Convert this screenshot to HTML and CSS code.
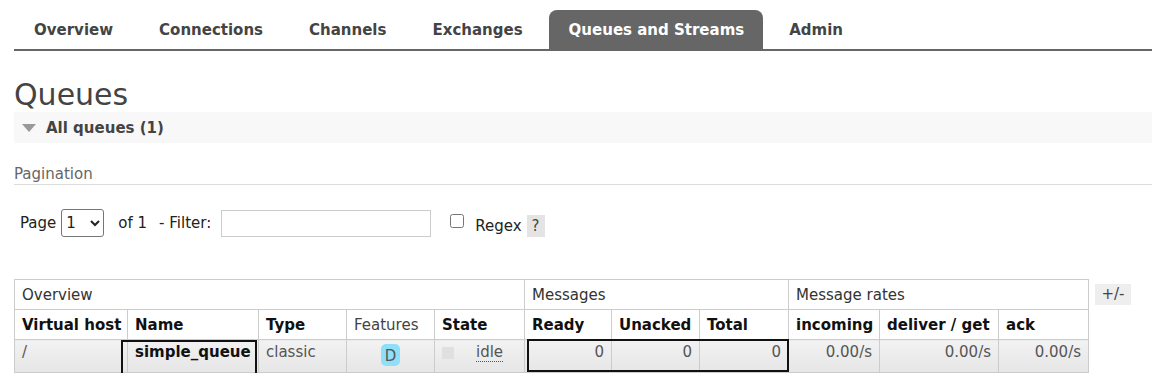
FILE: index.html
```html
<!DOCTYPE html>
<html>
    <head>
        <meta charset="UTF-8">
        <title>Queues - RabbitMQ Management</title>
        <link rel="stylesheet" href="styles.css">
    </head>

    <body>
        <div class="page">
            <ul class="menu">
                <li><a href="#">Overview</a></li>
                <li><a href="#">Connections</a></li>
                <li><a href="#">Channels</a></li>
                <li><a href="#">Exchanges</a></li>
                <li><a href="#" class="selected">Queues and Streams</a></li>
                <li><a href="#">Admin</a></li>
            </ul>

            <h1>Queues</h1>

            <div class="section-h">
                <span class="toggle"></span>
                All queues (1)
            </div>

            <h3 class="pagination">Pagination</h3>

            <div class="filter-row">
                <span>Page</span>
                <select class="page-select">
                    <option>1</option>
                </select>
                <span class="of">of 1</span>
                <span class="filter-label">- Filter:</span>
                <input type="text" class="filter-input">
                <input type="checkbox" class="regex-check">
                <span class="regex">Regex</span>
                <span class="help">?</span>
            </div>

            <div class="table-area">
                <div class="table-wrap">
                    <table class="list">
                        <colgroup>
                            <col style="width:113px">
                            <col style="width:131px">
                            <col style="width:88px">
                            <col style="width:88px">
                            <col style="width:90px">
                            <col style="width:87px">
                            <col style="width:88px">
                            <col style="width:89px">
                            <col style="width:91px">
                            <col style="width:119px">
                            <col style="width:90px">
                        </colgroup>
                        <thead>
                            <tr class="group-row">
                                <th colspan="5">Overview</th>
                                <th colspan="3">Messages</th>
                                <th colspan="3">Message rates</th>
                            </tr>
                            <tr class="head-row">
                                <th>Virtual host</th>
                                <th>Name</th>
                                <th>Type</th>
                                <th class="plain">Features</th>
                                <th>State</th>
                                <th>Ready</th>
                                <th>Unacked</th>
                                <th>Total</th>
                                <th>incoming</th>
                                <th>deliver / get</th>
                                <th>ack</th>
                            </tr>
                        </thead>
                        <tbody>
                            <tr class="data-row">
                                <td>/</td>
                                <td class="qname">simple_queue</td>
                                <td>classic</td>
                                <td class="c"><span class="badge">D</span></td>
                                <td><div class="state"><span class="state-box"></span><abbr>idle</abbr></div></td>
                                <td class="r">0</td>
                                <td class="r">0</td>
                                <td class="r">0</td>
                                <td class="r">0.00/s</td>
                                <td class="r">0.00/s</td>
                                <td class="r">0.00/s</td>
                            </tr>
                        </tbody>
                    </table>
                    <div class="mark mark-name"></div>
                    <div class="mark mark-msgs"></div>
                </div>
                <span class="plus-minus">+/-</span>
            </div>
        </div>
    </body>
</html>
```

FILE: styles.css
```css
body {
    margin: 0;
    font: 15px "DejaVu Sans", Verdana, sans-serif;
    color: #484848;
}

.page {
    padding-left: 14px;
}

/* menu tabs */
.menu {
    list-style: none;
    margin: 10px 0 0 0;
    padding: 0;
    display: flex;
    gap: 6px;
    border-bottom: 2px solid #666;
}

.menu a {
    display: block;
    padding: 1px 20px 0 20px;
    line-height: 38px;
    font-weight: bold;
    color: #444;
    text-decoration: none;
    border-radius: 8px 8px 0 0;
}

.menu a.selected {
    background-color: #666;
    color: #fff;
    padding-right: 19px;
}

h1 {
    font-size: 30px;
    font-weight: normal;
    line-height: 34px;
    color: #444;
    margin: 27px 0 0 0;
}

.section-h {
    background-color: #f8f8f8;
    height: 31px;
    display: flex;
    align-items: center;
    padding-left: 8px;
    font-weight: bold;
    color: #444;
}

.toggle {
    width: 0;
    height: 0;
    border-left: 7px solid transparent;
    border-right: 7px solid transparent;
    border-top: 8px solid #999;
    margin-right: 10px;
    margin-top: 1px;
}

.pagination {
    font-size: 15px;
    font-weight: normal;
    line-height: 18px;
    color: #666;
    margin: 22px 0 0 0;
    padding-bottom: 1px;
    border-bottom: 1px solid #ddd;
}

/* filter row */
.filter-row {
    display: flex;
    align-items: center;
    margin-top: 24px;
    padding-left: 6px;
    height: 28px;
    color: #222;
}

.page-select {
    margin-left: 5px;
    width: 43px;
    height: 28px;
    font: 15px "DejaVu Sans", Verdana, sans-serif;
    border: 1px solid #767676;
    border-radius: 3px;
    background: #fff;
    color: #222;
}

.of {
    margin-left: 14px;
}

.filter-label {
    margin-left: 12px;
}

.filter-input {
    margin: 0 0 0 10px;
    width: 210px;
    height: 27px;
    box-sizing: border-box;
    border: 1px solid #ccc;
}

.regex-check {
    margin: 0 0 0 19px;
    width: 14px;
    height: 14px;
    position: relative;
    top: -2px;
}

.regex {
    margin-left: 11px;
    padding-top: 6px;
}

.help {
    margin-left: 5px;
    margin-top: 5px;
    width: 18px;
    height: 22px;
    line-height: 22px;
    text-align: center;
    background-color: #e4e4e4;
    color: #444;
}

/* queue table */
.table-area {
    display: flex;
    align-items: flex-start;
    margin-top: 42px;
}

.table-wrap {
    position: relative;
}

table.list {
    border-collapse: collapse;
    table-layout: fixed;
    width: 1074px;
    border: 1px solid #ccc;
}

table.list th,
table.list td {
    border: 1px solid #ccc;
    padding: 0 7px;
    text-align: left;
    white-space: nowrap;
}

.group-row th {
    height: 29px;
    font-weight: normal;
    color: #333;
}

.head-row th {
    height: 29px;
    color: #111;
}

.head-row th.plain {
    font-weight: normal;
    color: #444;
}

table.list tr.data-row td {
    height: 29px;
    padding-top: 3px;
    line-height: 18px;
    background: linear-gradient(#f2f2f2, #e6e6e6);
    color: #555;
    vertical-align: top;
}

table.list tr.data-row td.qname {
    font-weight: bold;
    color: #111;
}

table.list tr.data-row td.r {
    text-align: right;
}

table.list tr.data-row td.c {
    text-align: center;
}

.badge {
    display: inline-block;
    vertical-align: top;
    width: 19px;
    height: 22px;
    line-height: 24px;
    border-radius: 5px;
    background-color: #8ee0f8;
    color: #555;
    text-align: center;
    margin-top: 1px;
}

.state {
    display: flex;
    align-items: center;
}

.state-box {
    width: 12px;
    height: 12px;
    background-color: #e0e0e0;
    margin-right: 22px;
}

abbr {
    text-decoration: none;
    border-bottom: 1px dotted #555;
}

/* highlight boxes drawn over the table */
.mark {
    position: absolute;
    border: 2px solid #111;
    box-sizing: border-box;
}

.mark-name {
    left: 107px;
    top: 61px;
    width: 136px;
    height: 36px;
}

.mark-msgs {
    left: 513px;
    top: 60px;
    width: 262px;
    height: 33px;
}

.plus-minus {
    margin: 5px 0 0 6px;
    width: 36px;
    height: 21px;
    line-height: 21px;
    text-align: center;
    background-color: #eee;
    color: #444;
}
```
